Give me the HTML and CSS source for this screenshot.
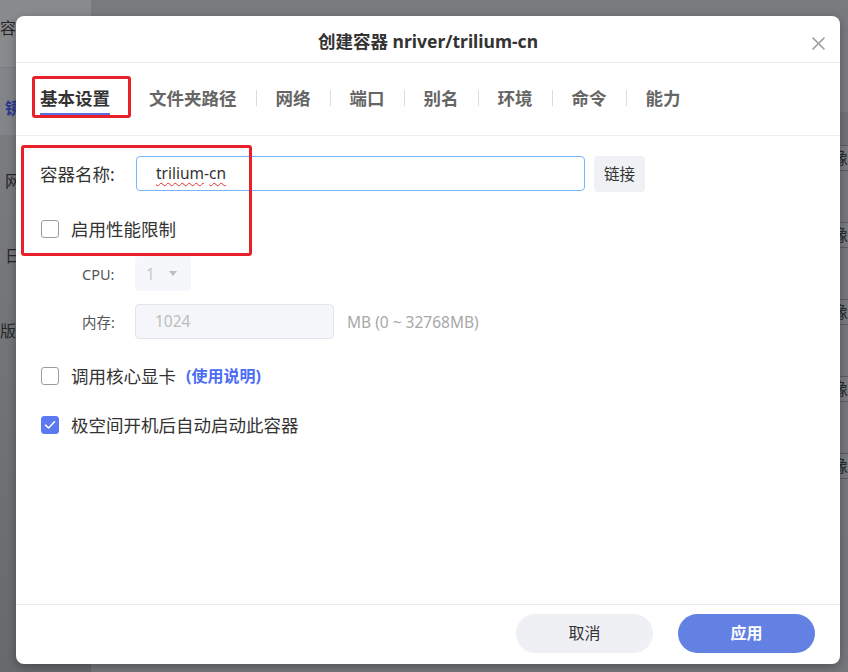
FILE: index.html
```html
<!DOCTYPE html>
<html lang="zh-CN">
<head>
<meta charset="utf-8">
<title>创建容器</title>
<link rel="stylesheet" href="styles.css">
</head>
<body>
<div class="page">
  <aside class="side">
    <div class="side-head"><span class="side-t t-cut1">容器</span></div>
    <div class="side-active"><span class="side-t t-blue">镜像</span></div>
    <div class="side-list">
      <span class="side-t">网络</span>
      <span class="side-t">日志</span>
      <span class="side-t t-cut2">版本</span>
    </div>
  </aside>
  <div class="main">
    <div class="main-top"></div>
    <div class="thead"></div>
    <div class="trow"><span class="cell">镜像</span></div>
    <div class="trow"><span class="cell">镜像</span></div>
    <div class="trow"><span class="cell">镜像</span></div>
    <div class="trow"><span class="cell">镜像</span></div>
    <div class="trow"><span class="cell">镜像</span></div>
  </div>
</div>

<div class="modal">
  <header class="head">
    <span></span>
    <h1 class="title">创建容器 nriver/trilium-cn</h1>
    <span class="close">
      <svg width="13" height="13" viewBox="0 0 13 13"><path d="M1 1L12 12M12 1L1 12" stroke="#9a9a9a" stroke-width="1.6" fill="none" stroke-linecap="round"/></svg>
    </span>
  </header>
  <nav class="tabs">
    <span class="tab active">基本设置</span><span class="sep"></span>
    <span class="tab">文件夹路径</span><span class="sep"></span>
    <span class="tab">网络</span><span class="sep"></span>
    <span class="tab">端口</span><span class="sep"></span>
    <span class="tab">别名</span><span class="sep"></span>
    <span class="tab">环境</span><span class="sep"></span>
    <span class="tab">命令</span><span class="sep"></span>
    <span class="tab">能力</span>
  </nav>
  <section class="content">
    <div class="row-name">
      <span class="label">容器名称:</span>
      <div class="field"><span class="typo">trilium</span>-<span class="typo">cn</span></div>
      <span class="link-btn">链接</span>
    </div>
    <div class="check-row first">
      <span class="box"></span>
      <span class="check-label">启用性能限制</span>
    </div>
    <div class="sub-row cpu">
      <span class="sub-label">CPU:</span>
      <div class="select"><span class="sel-val">1</span><span class="caret"></span></div>
    </div>
    <div class="sub-row mem">
      <span class="sub-label">内存:</span>
      <div class="mem-field">1024</div>
      <span class="unit">MB (0 ~ 32768MB)</span>
    </div>
    <div class="check-row gpu">
      <span class="box"></span>
      <span class="check-label">调用核心显卡</span>
      <span class="help">(使用说明)</span>
    </div>
    <div class="check-row auto">
      <span class="box checked">
        <svg width="12" height="10" viewBox="0 0 12 10"><path d="M1.5 5.2L4.6 8L10.5 1.8" stroke="#fff" stroke-width="1.6" fill="none" stroke-linecap="round" stroke-linejoin="round"/></svg>
      </span>
      <span class="check-label">极空间开机后自动启动此容器</span>
    </div>
  </section>
  <footer class="foot">
    <span class="btn cancel">取消</span>
    <span class="btn apply">应用</span>
  </footer>
</div>

<div class="mark mark-tab"></div>
<div class="mark mark-name"></div>
</body>
</html>
```

FILE: styles.css
```css
* { box-sizing: border-box; }
html, body { margin: 0; padding: 0; }
body {
  width: 848px;
  height: 672px;
  overflow: hidden;
  position: relative;
  background: #76777b;
  font-family: "Noto Sans", "Noto Sans CJK SC", sans-serif;
  color: #333;
}

/* dimmed page underneath */
.page { display: flex; height: 672px; }
.side {
  width: 116px;
  display: flex;
  flex-direction: column;
  background: linear-gradient(#7f8084, #68696d);
}
.side-t { font-size: 16px; line-height: 20px; color: #26272a; white-space: nowrap; display: block; }
.side-head { height: 68px; background: #898a8e; border-bottom: 1px solid #7b7c80; padding-top: 18px; }
.t-cut1 { margin-left: 0; }
.side-active { height: 67px; background: #838489; padding-top: 30px; }
.t-blue { color: #2a3890; margin-left: 5px; font-weight: 700; }
.side-list { display: flex; flex-direction: column; gap: 55px; padding-top: 36px; }
.side-list .side-t { margin-left: 5px; }
.side-list .t-cut2 { margin-left: 0; }

.main { flex: 1; display: flex; flex-direction: column; }
.main-top { height: 112px; background: #797a7e; }
.thead { height: 33px; background: #717276; }
.trow {
  height: 77px;
  border-top: 1px solid #5c5d61;
  background: linear-gradient(#7a7b7f 0 24px, #5c5d61 24px 25px, #77787c 25px);
  padding-left: 725px;
}
.cell { display: block; font-size: 16px; line-height: 24px; color: #2a2b2e; white-space: nowrap; }

/* modal */
.modal {
  position: absolute;
  left: 16px;
  top: 16px;
  width: 824px;
  height: 648px;
  background: #fff;
  border-radius: 8px;
  box-shadow: 0 3px 10px rgba(0, 0, 0, 0.3);
  display: flex;
  flex-direction: column;
  overflow: hidden;
}
.head {
  height: 47px;
  border-bottom: 1px solid #ededed;
  padding-top: 4px;
  display: grid;
  grid-template-columns: 1fr auto 1fr;
  align-items: center;
}
.title { margin: 0; font-size: 17.5px; font-weight: 700; line-height: 24px; color: #333; white-space: nowrap; }
.close { justify-self: end; margin-right: 15px; margin-top: 4px; display: flex; }

.tabs {
  height: 73px;
  border-bottom: 1px solid #ededed;
  padding: 23px 0 0 24px;
  display: flex;
  align-items: flex-start;
}
.tab { font-size: 17.5px; font-weight: 700; line-height: 24px; color: #666; white-space: nowrap; }
.tab.active { color: #333; padding-bottom: 3px; border-bottom: 2px solid #5b6ee8; }
.sep { width: 1px; height: 16px; background: #dcdcdc; margin: 4px 19px 0; }

.content { flex: 1; padding: 20px 24px 0; }
.row-name { display: flex; align-items: center; height: 35px; }
.label { width: 96px; font-size: 17.5px; line-height: 24px; color: #333; }
.field {
  width: 449px;
  height: 35px;
  border: 1px solid #78b5ff;
  border-radius: 4px;
  padding-left: 19px;
  font-size: 15.5px;
  line-height: 33px;
  color: #333;
}
.typo {
  text-decoration: underline wavy #e8302f;
  text-decoration-thickness: 1px;
  text-underline-offset: 3px;
  text-decoration-skip-ink: none;
}
.link-btn {
  margin-left: 9px;
  width: 51px;
  height: 36px;
  background: #f0f1f5;
  border-radius: 4px;
  font-size: 15.5px;
  line-height: 36px;
  text-align: center;
  color: #333;
}

.check-row { display: flex; align-items: center; height: 30px; margin-left: 1px; }
.check-row.first { margin-top: 23px; }
.check-row.gpu { margin-top: 22px; }
.check-row.auto { margin-top: 19px; }
.box {
  width: 18px;
  height: 18px;
  border: 1px solid #9c9c9c;
  border-radius: 3px;
  background: #fff;
  margin-right: 12px;
  display: flex;
  align-items: center;
  justify-content: center;
}
.box.checked { background: #5b79f1; border-color: #5b79f1; }
.check-label { font-size: 17.5px; line-height: 24px; color: #333; white-space: nowrap; }
.help { margin-left: 10px; font-size: 16px; font-weight: 700; line-height: 24px; color: #4b6cf3; }

.sub-row { display: flex; align-items: center; height: 35px; padding-left: 42px; }
.sub-row.cpu { margin-top: 12px; }
.sub-row.mem { margin-top: 13px; }
.sub-label { width: 53px; font-size: 14.5px; line-height: 20px; color: #555; }
.select {
  width: 56px;
  height: 35px;
  background: #f6f7fa;
  border-radius: 4px;
  display: flex;
  align-items: center;
  padding-left: 11px;
}
.sel-val { font-size: 15.5px; color: #c9c9c9; }
.caret {
  margin-left: 14px;
  width: 0;
  height: 0;
  border-left: 4.5px solid transparent;
  border-right: 4.5px solid transparent;
  border-top: 5px solid #bdbdbd;
}
.mem-field {
  width: 199px;
  height: 35px;
  background: #f5f6f9;
  border: 1px solid #e3e5ea;
  border-radius: 4px;
  padding-left: 19px;
  font-size: 15.5px;
  line-height: 33px;
  color: #bcbcbc;
}
.unit { margin-left: 13px; font-size: 15.5px; color: #a8a8a8; white-space: nowrap; }

.foot {
  height: 60px;
  border-top: 1px solid #ebebeb;
  display: flex;
  justify-content: flex-end;
  align-items: flex-start;
  gap: 25px;
  padding: 9px 25px 0 0;
}
.btn {
  width: 137px;
  height: 39px;
  border-radius: 20px;
  font-size: 16px;
  line-height: 39px;
  text-align: center;
}
.cancel { background: #eff0f4; color: #333; }
.apply { background: #6381e3; color: #fff; font-weight: 700; }

/* red annotation frames drawn over the screenshot */
.mark {
  position: absolute;
  border: 3px solid #e8202a;
  border-radius: 3px;
  z-index: 5;
}
.mark-tab { left: 32px; top: 76px; width: 99px; height: 42px; }
.mark-name { left: 21px; top: 145px; width: 231px; height: 111px; }
```
